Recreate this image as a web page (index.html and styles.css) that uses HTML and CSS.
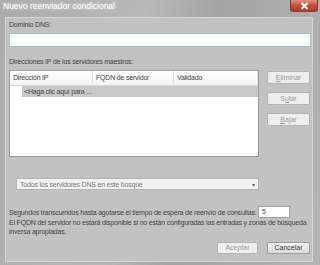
FILE: index.html
```html
<!DOCTYPE html>
<html lang="es">
<head>
  <meta charset="UTF-8" />
  <title>Nuevo reenviador condicional</title>
  <link rel="stylesheet" href="styles.css">
</head>
<body>
  <div class="window">
    <div class="titlebar">
      <span class="title">Nuevo reenviador condicional</span>
      <button class="close-btn" title="Cerrar">
        <svg width="9" height="8" viewBox="0 0 9 8"><path d="M1.5 1 L7.5 7 M7.5 1 L1.5 7" stroke="#fff" stroke-width="2" fill="none"/></svg>
      </button>
    </div>

    <div class="client">
      <div class="label first">Dominio DNS:</div>
      <input type="text" class="field wide" />

      <div class="label second">Direcciones IP de los servidores maestros:</div>
      <div class="list-row">
        <div class="list">
          <div class="list-head">
            <span class="col col-ip">Dirección IP</span>
            <span class="col col-fqdn">FQDN de servidor</span>
            <span class="col col-val">Validado</span>
          </div>
          <div class="list-item">&lt;Haga clic aquí para ...</div>
        </div>
        <div class="side-buttons">
          <button class="btn disabled"><u>E</u>liminar</button>
          <button class="btn disabled">S<u>u</u>bir</button>
          <button class="btn disabled"><u>B</u>ajar</button>
        </div>
      </div>

      <div class="combo">
        <span>Todos los servidores DNS en este bosque</span>
        <span class="arrow">&#9662;</span>
      </div>

      <div class="timeout-row">
        <span class="timeout-text">Segundos transcurridos hasta agotarse el tiempo de espera de reenvío de consultas:</span>
        <div class="field small">5</div>
      </div>
      <p class="note">El FQDN del servidor no estará disponible si no están configuradas las entradas y zonas de búsqueda inversa apropiadas.</p>

      <div class="footer">
        <button class="btn disabled">Aceptar</button>
        <button class="btn">Cancelar</button>
      </div>
    </div>
  </div>
</body>
</html>
```

FILE: styles.css
```css
body {
  margin: 0;
  width: 320px;
  height: 265px;
  overflow: hidden;
  font-family: "Liberation Sans", Arial, sans-serif;
  font-size: 7px;
  letter-spacing: -0.2px;
  color: #444;
}
.window {
  width: 320px;
  height: 265px;
  background: linear-gradient(100deg, #ababab 0%, #b8b8b8 40%, #a4a4a4 60%, #b4b4b4 100%);
  display: flex;
  flex-direction: column;
}
.titlebar {
  height: 17px;
  display: flex;
  align-items: flex-start;
}
.title {
  margin: 1px 0 0 3px;
  font-size: 8.5px;
  letter-spacing: 0;
  line-height: 10px;
  color: #fff;
  text-shadow: 0 0 3px #d8d8d8, 0 0 5px #cfcfcf;
}
.close-btn {
  margin-left: auto;
  margin-right: 2px;
  width: 28px;
  height: 12px;
  padding: 0;
  border: 1px solid #8a3a30;
  border-top: none;
  border-radius: 0 0 3px 3px;
  background: linear-gradient(#e0907e, #c4503c 50%, #b03a28);
  display: flex;
  align-items: center;
  justify-content: center;
}
.client {
  margin: 0 7px 3px 5px;
  height: 243px;
  border: 1px solid #d6d6d6;
  background: #c2c2c2;
  padding: 0 2px 0 3px;
  display: flex;
  flex-direction: column;
}
.label {
  line-height: 9px;
  height: 9px;
}
.label.first {
  margin-top: 2px;
}
.label.second {
  margin-top: 10px;
}
.field {
  box-sizing: border-box;
  background: #fff;
  border: 1px solid #a9bfd0;
  font: inherit;
  color: inherit;
  padding: 0 3px;
}
.field.wide {
  margin-top: 4px;
  height: 14px;
  width: 302px;
}
.list-row {
  margin-top: 4px;
  display: flex;
  gap: 8px;
}
.list {
  width: 250px;
  height: 87px;
  box-sizing: border-box;
  background: #fff;
  border: 1px solid #9a9a9a;
  border-top-color: #a4a4a4;
}
.list-head {
  display: flex;
  height: 14px;
  border-bottom: 1px solid #d8d8d8;
  background: linear-gradient(#ffffff, #f3f3f3);
}
.col {
  line-height: 14px;
  padding-left: 3px;
  border-right: 1px solid #e0e0e0;
}
.col-ip {
  width: 79px;
}
.col-fqdn {
  width: 77px;
}
.col-val {
  width: 80px;
}
.list-item {
  margin-left: 12px;
  height: 11px;
  line-height: 11px;
  padding-left: 2px;
  background: #c9c9c9;
}
.side-buttons {
  display: flex;
  flex-direction: column;
  gap: 8px;
  margin-top: 1px;
}
.btn {
  box-sizing: border-box;
  width: 43px;
  height: 12px;
  padding: 0;
  font: inherit;
  color: #3a3a3a;
  line-height: 10px;
  border: 1px solid #9c9c9c;
  border-radius: 2px;
  background: linear-gradient(#f6f6f6, #e6e6e6 50%, #dcdcdc);
}
.btn.disabled {
  color: #9a9a9a;
  border-color: #b4b4b4;
  background: #eeeeee;
}
.side-buttons .btn {
  height: 13px;
}
.combo {
  margin: 21px 0 0 7px;
  width: 243px;
  height: 12px;
  box-sizing: border-box;
  border: 1px solid #b4b4b4;
  background: #f2f2f2;
  color: #7a7a7a;
  display: flex;
  align-items: center;
  justify-content: space-between;
  padding: 0 3px;
}
.combo .arrow {
  font-size: 6px;
  color: #666;
}
.timeout-row {
  margin-top: 16px;
  display: flex;
  align-items: center;
}
.timeout-text {
  white-space: nowrap;
}
.field.small {
  margin-left: auto;
  margin-right: 20px;
  width: 32px;
  height: 12px;
  line-height: 10px;
  border-color: #a0a0a0;
}
.note {
  margin: 1px 0 0;
  line-height: 8.5px;
  width: 306px;
}
.footer {
  margin-top: auto;
  margin-bottom: 7px;
  display: flex;
  justify-content: flex-end;
  gap: 9px;
}
.footer .btn:first-child {
  width: 41px;
}
```
